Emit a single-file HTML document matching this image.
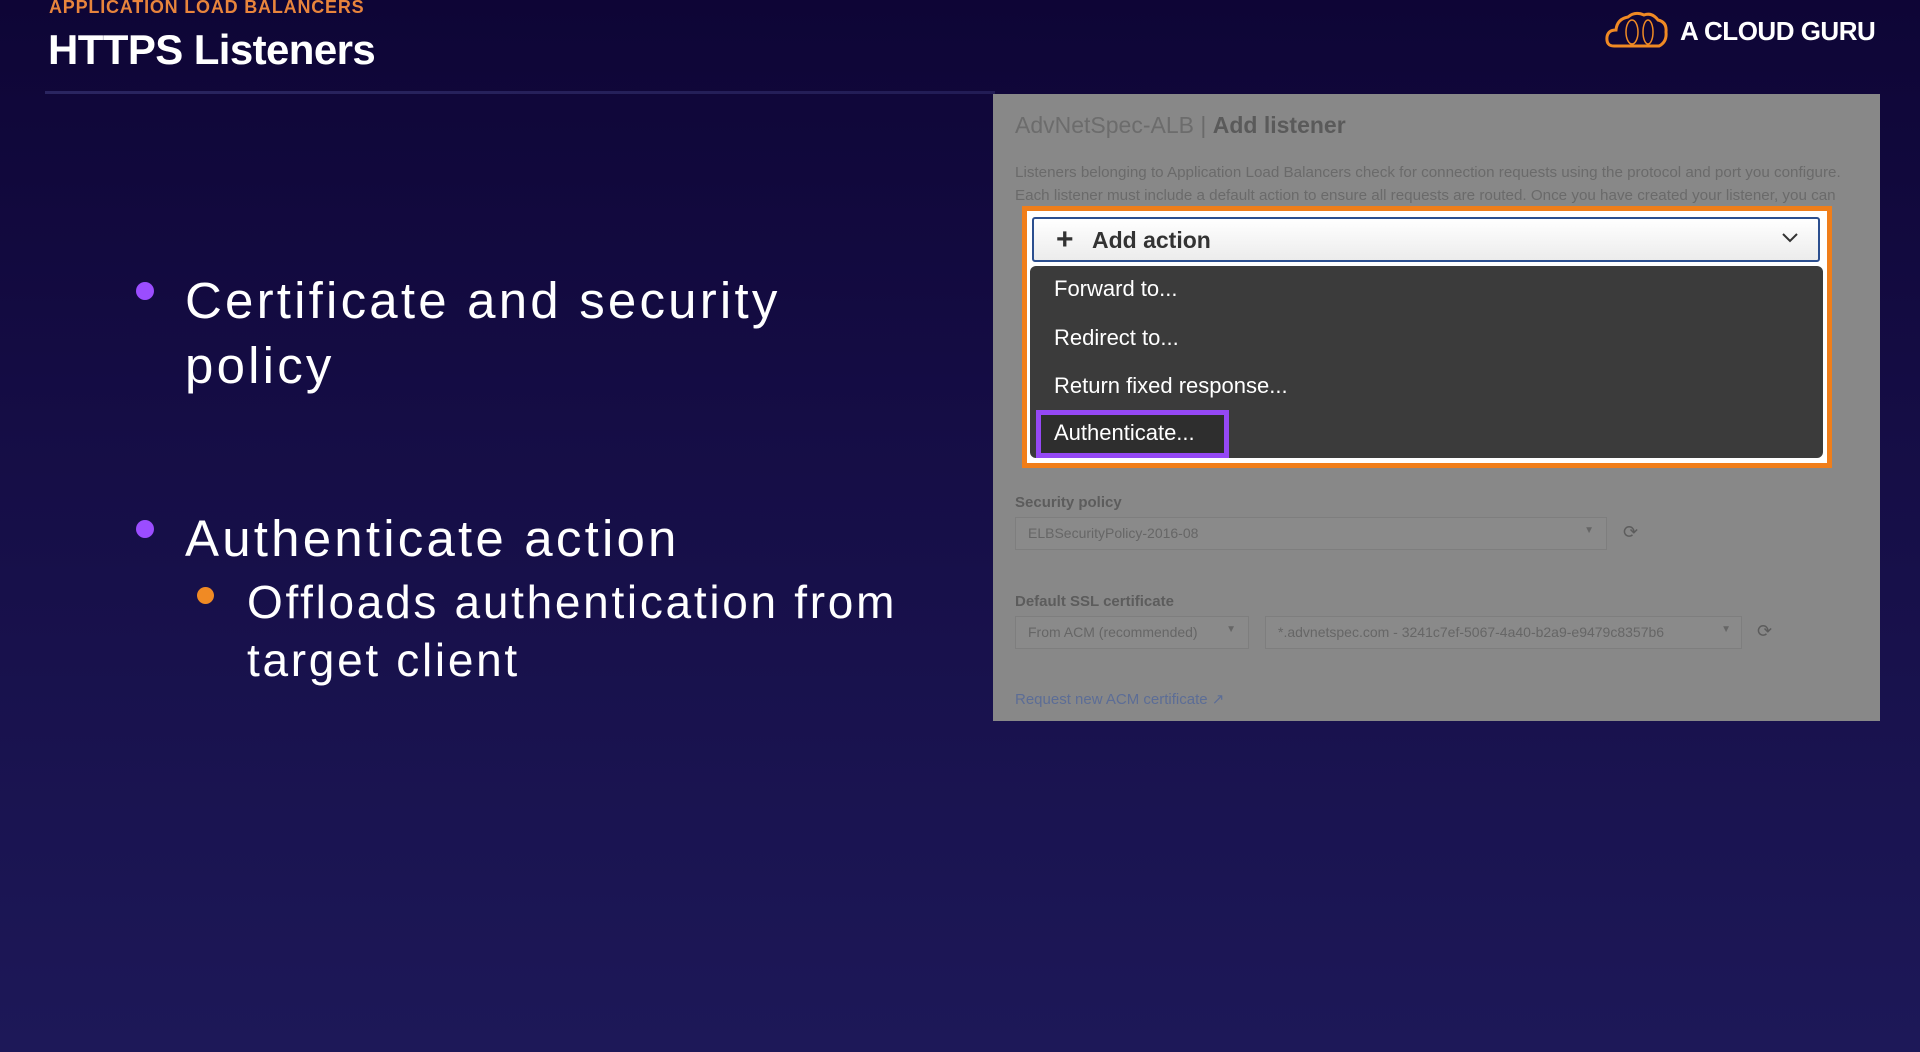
<!DOCTYPE html>
<html><head><meta charset="utf-8"><style>
*{margin:0;padding:0;box-sizing:border-box}
body{width:1920px;height:1052px;overflow:hidden;background:linear-gradient(180deg,#0e0536 0%,#150d45 40%,#1d1858 100%);font-family:"Liberation Sans",sans-serif;position:relative;color:#fff}
.a{position:absolute;white-space:nowrap}
.sub{left:49px;top:-3px;font-size:18px;color:#e8843c;font-weight:bold;letter-spacing:0.8px}
.title{left:48px;top:26px;font-size:42px;font-weight:bold;letter-spacing:-0.6px}
.line{left:45px;top:91px;width:950px;height:3px;background:linear-gradient(90deg,#2a2560,#221c55)}
.logo{left:1680px;top:16px;font-size:26px;font-weight:bold;letter-spacing:-0.5px}
.panel{left:993px;top:94px;width:887px;height:627px;background:#888888}
.dot{position:absolute;border-radius:50%}
.big{font-size:51px;line-height:65px;letter-spacing:3.2px}
.med{font-size:46px;line-height:58px;letter-spacing:2.7px}
.sel{position:absolute;border:1px solid #7e7e7e;background:#8a8a8a;height:33px;font-size:14px;color:#666;padding:7px 12px}
</style></head><body>
<div class="a sub">APPLICATION LOAD BALANCERS</div>
<div class="a title">HTTPS Listeners</div>
<div class="a line"></div>
<svg class="a" style="left:1604px;top:10px" width="66" height="40" viewBox="0 0 66 40"><path d="M10 36 Q2 36 3 27 Q4 20 12 20 Q13 9 24 7 Q31 1 40 5 Q48 2 54 10 Q63 12 62 22 Q63 32 55 36 Z" fill="none" stroke="#f08a24" stroke-width="3"/><ellipse cx="28" cy="22" rx="6" ry="12" fill="none" stroke="#f08a24" stroke-width="1.5"/><ellipse cx="44" cy="22" rx="5" ry="12" fill="none" stroke="#f08a24" stroke-width="1.5"/></svg>
<div class="a logo">A CLOUD GURU</div>

<div class="a panel">
<div class="a" style="left:22px;top:18px;font-size:23px;color:#6c6c6c"><span style="font-weight:300">AdvNetSpec-ALB</span> <span style="color:#6a6a6a">|</span> <b style="color:#5a5a5a">Add listener</b></div>
<div class="a" style="left:22px;top:67px;font-size:15.2px;color:#6a6a6a;line-height:23px">Listeners belonging to Application Load Balancers check for connection requests using the protocol and port you configure.<br>Each listener must include a default action to ensure all requests are routed. Once you have created your listener, you can</div>
<div class="a" style="left:22px;top:400px;font-size:15px;font-weight:bold;color:#5c5c5c">Security policy</div>
<div class="sel" style="left:22px;top:423px;width:592px">ELBSecurityPolicy-2016-08<span style="position:absolute;right:12px;font-size:10px">▼</span></div>
<div class="a" style="left:630px;top:428px;font-size:18px;color:#5c5c5c">⟳</div>
<div class="a" style="left:22px;top:499px;font-size:15px;font-weight:bold;color:#5c5c5c">Default SSL certificate</div>
<div class="sel" style="left:22px;top:522px;width:234px">From ACM (recommended)<span style="position:absolute;right:12px;font-size:10px">▼</span></div>
<div class="sel" style="left:272px;top:522px;width:477px">*.advnetspec.com - 3241c7ef-5067-4a40-b2a9-e9479c8357b6<span style="position:absolute;right:10px;font-size:10px">▼</span></div>
<div class="a" style="left:764px;top:527px;font-size:18px;color:#5c5c5c">⟳</div>
<div class="a" style="left:22px;top:596px;font-size:15px;color:#5c6d96">Request new ACM certificate ↗</div>
</div>

<div class="a" style="left:1022px;top:206px;width:810px;height:262px;border:5px solid #f07e1a;background:#fff"></div>
<div class="a" style="left:1032px;top:217px;width:788px;height:45px;border:2px solid #2c4f8f;border-radius:3px;background:linear-gradient(#fff,#ececec);font-size:23px;font-weight:bold;color:#333;padding:8px 0 0 58px">Add action
<span style="position:absolute;left:22px;top:4px;font-size:30px">+</span>
<svg style="position:absolute;right:20px;top:14px" width="16" height="10"><path d="M1 1 L8 8 L15 1" fill="none" stroke="#333" stroke-width="2"/></svg></div>
<div class="a" style="left:1030px;top:266px;width:793px;height:192px;background:#3b3b3b;border-radius:6px"></div>
<div class="a" style="left:1054px;top:276px;font-size:22px;color:#fff">Forward to...</div>
<div class="a" style="left:1054px;top:325px;font-size:22px;color:#fff">Redirect to...</div>
<div class="a" style="left:1054px;top:373px;font-size:22px;color:#fff">Return fixed response...</div>
<div class="a" style="left:1036px;top:410px;width:193px;height:48px;border:5px solid #9548f5;background:#2e2e2e"></div>
<div class="a" style="left:1054px;top:420px;font-size:22px;color:#fff">Authenticate...</div>

<div class="dot" style="left:136px;top:282px;width:18px;height:18px;background:#9b4dff"></div>
<div class="a big" style="left:185px;top:268px">Certificate and security<br>policy</div>
<div class="dot" style="left:136px;top:520px;width:18px;height:18px;background:#9b4dff"></div>
<div class="a big" style="left:185px;top:506px">Authenticate action</div>
<div class="dot" style="left:197px;top:587px;width:17px;height:17px;background:#f08a24"></div>
<div class="a med" style="left:247px;top:573px">Offloads authentication from<br>target client</div>
</body></html>
